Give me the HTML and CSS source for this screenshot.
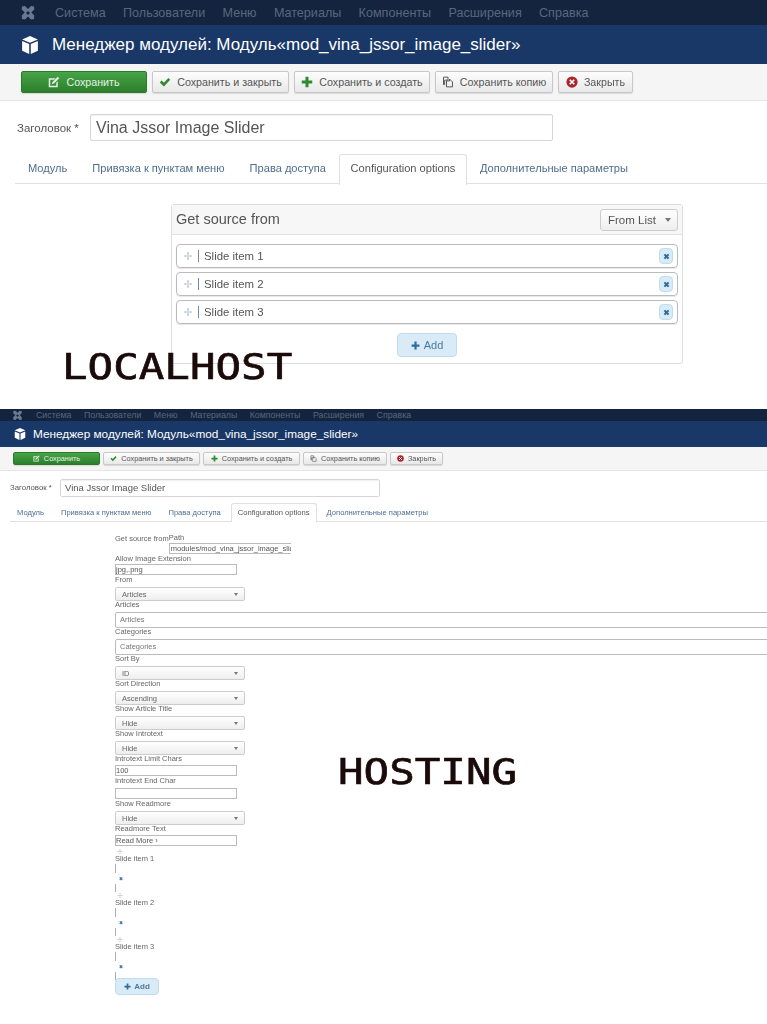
FILE: index.html
```html
<!DOCTYPE html>
<html lang="ru">
<head>
<meta charset="utf-8">
<title>Менеджер модулей</title>
<link rel="stylesheet" href="styles.css">
</head>
<body>
<svg class="defs" width="0" height="0" aria-hidden="true">
  <symbol id="i-joomla" viewBox="0 0 16 16"><path d="M2 1.500 5 1l3 3 3-3 3 .5.3 3-3 3 3 3-.3 3.500-3 .5-3-3-3 3-3-.5-.3-3.500 3-3-3-3zM8 6 6 8l2 2 2-2z" fill="currentColor"/></symbol>
  <symbol id="i-cube" viewBox="0 0 16 16"><path d="M8 0 15 3 8 6 1 3zM1 4.500 7.300 7.200V16L1 13zM15 4.500 8.700 7.200V16L15 13z" fill="currentColor"/></symbol>
  <symbol id="i-edit" viewBox="0 0 16 16"><path d="M1 3h9L8 5H3v8h8V9l2-2v8H1zM13 1l2 2-7 7-3 1 1-3z" fill="currentColor"/></symbol>
  <symbol id="i-check" viewBox="0 0 16 16"><path d="M1 8.500 3.500 6 6.500 9 12.500 2.500 15 5 6.500 14z" fill="currentColor"/></symbol>
  <symbol id="i-plus" viewBox="0 0 16 16"><path d="M6 1h4v5h5v4h-5v5H6v-5H1V6h5z" fill="currentColor"/></symbol>
  <symbol id="i-copy" viewBox="0 0 16 16"><path d="M2 1.500h6v4h-4.500v6H2zM6 6.500h4V4l4 4v6.500H6z" fill="none" stroke="currentColor" stroke-width="1.300"/></symbol>
  <symbol id="i-close" viewBox="0 0 16 16"><circle cx="8" cy="8" r="7.500" fill="currentColor"/><path d="M5 5l6 6M11 5l-6 6" stroke="#fff" stroke-width="2.200"/></symbol>
  <symbol id="i-x" viewBox="0 0 16 16"><path d="M3 5.500 5.500 3 8 5.500 10.500 3 13 5.500 10.500 8 13 10.500 10.500 13 8 10.500 5.500 13 3 10.500 5.500 8z" fill="currentColor"/></symbol>
  <symbol id="i-move" viewBox="0 0 16 16"><path d="M8 0 10.500 3H8.700v4.300H13V5.500L16 8l-3 2.500V8.700H8.700V13h1.800L8 16l-2.500-3h1.800V8.700H3v1.800L0 8l3-2.500v1.800h4.300V3H5.500z" fill="currentColor"/></symbol>
</svg>

<section class="local">
  <nav class="nav">
    <svg class="nav-logo"><use href="#i-joomla"/></svg>
    <a>Система</a><a>Пользователи</a><a>Меню</a><a>Материалы</a><a>Компоненты</a><a>Расширения</a><a>Справка</a>
  </nav>
  <header class="head">
    <svg class="head-icon"><use href="#i-cube"/></svg>
    <h1>Менеджер модулей: Модуль«mod_vina_jssor_image_slider»</h1>
  </header>
  <div class="bar">
    <button class="btn save w1"><svg><use href="#i-edit"/></svg>Сохранить</button>
    <button class="btn w2"><svg class="green"><use href="#i-check"/></svg>Сохранить и закрыть</button>
    <button class="btn w3"><svg class="green"><use href="#i-plus"/></svg>Сохранить и создать</button>
    <button class="btn w4"><svg><use href="#i-copy"/></svg>Сохранить копию</button>
    <button class="btn w5"><svg class="red"><use href="#i-close"/></svg>Закрыть</button>
  </div>
  <div class="title-row">
    <label>Заголовок *</label>
    <div class="title-input">Vina Jssor Image Slider</div>
  </div>
  <div class="tabs">
    <a>Модуль</a><a>Привязка к пунктам меню</a><a>Права доступа</a><a class="active">Configuration options</a><a>Дополнительные параметры</a>
  </div>
  <div class="panel">
    <div class="panel-head">
      <span class="panel-title">Get source from</span>
      <div class="panel-select">From List<i class="caret"></i></div>
    </div>
    <div class="panel-body">
      <div class="item"><svg class="move"><use href="#i-move"/></svg><span class="sep"></span><span class="item-name">Slide item 1</span><b class="del"><svg><use href="#i-x"/></svg></b></div>
      <div class="item"><svg class="move"><use href="#i-move"/></svg><span class="sep"></span><span class="item-name">Slide item 2</span><b class="del"><svg><use href="#i-x"/></svg></b></div>
      <div class="item"><svg class="move"><use href="#i-move"/></svg><span class="sep"></span><span class="item-name">Slide item 3</span><b class="del"><svg><use href="#i-x"/></svg></b></div>
      <button class="add"><svg><use href="#i-plus"/></svg>Add</button>
    </div>
  </div>
  <div class="stamp stamp-local">LOCALHOST</div>
</section>

<section class="hosting">
  <nav class="nav">
    <svg class="nav-logo"><use href="#i-joomla"/></svg>
    <a>Система</a><a>Пользователи</a><a>Меню</a><a>Материалы</a><a>Компоненты</a><a>Расширения</a><a>Справка</a>
  </nav>
  <header class="head">
    <svg class="head-icon"><use href="#i-cube"/></svg>
    <h1>Менеджер модулей: Модуль«mod_vina_jssor_image_slider»</h1>
  </header>
  <div class="bar">
    <button class="btn save w1"><svg><use href="#i-edit"/></svg>Сохранить</button>
    <button class="btn w2"><svg class="green"><use href="#i-check"/></svg>Сохранить и закрыть</button>
    <button class="btn w3"><svg class="green"><use href="#i-plus"/></svg>Сохранить и создать</button>
    <button class="btn w4"><svg><use href="#i-copy"/></svg>Сохранить копию</button>
    <button class="btn w5"><svg class="red"><use href="#i-close"/></svg>Закрыть</button>
  </div>
  <div class="title-row">
    <label>Заголовок *</label>
    <div class="title-input">Vina Jssor Image Slider</div>
  </div>
  <div class="tabs">
    <a>Модуль</a><a>Привязка к пунктам меню</a><a>Права доступа</a><a class="active">Configuration options</a><a>Дополнительные параметры</a>
  </div>
  <div class="form">
    <div class="path-row">
      <span class="lab">Get source from</span>
      <div class="path-col">
        <span class="lab-path">Path</span>
        <div class="field path">modules/mod_vina_jssor_image_slid</div>
      </div>
    </div>
    <span class="lab">Allow Image Extension</span>
    <div class="field short first">jpg,.png</div>
    <span class="lab">From</span>
    <div class="sel">Articles<i class="caret"></i></div>
    <span class="lab">Articles</span>
    <div class="wide">Articles</div>
    <span class="lab">Categories</span>
    <div class="wide">Categories</div>
    <span class="lab">Sort By</span>
    <div class="sel">ID<i class="caret"></i></div>
    <span class="lab">Sort Direction</span>
    <div class="sel">Ascending<i class="caret"></i></div>
    <span class="lab">Show Article Title</span>
    <div class="sel">Hide<i class="caret"></i></div>
    <span class="lab">Show Introtext</span>
    <div class="sel">Hide<i class="caret"></i></div>
    <span class="lab">Introtext Limit Chars</span>
    <div class="field short">100</div>
    <span class="lab">Introtext End Char</span>
    <div class="field short end"></div>
    <span class="lab">Show Readmore</span>
    <div class="sel">Hide<i class="caret"></i></div>
    <span class="lab">Readmore Text</span>
    <div class="field short last">Read More ›</div>
    <div class="slide"><svg class="move"><use href="#i-move"/></svg><span class="lab">Slide item 1</span><span class="rule"></span><svg class="del-x"><use href="#i-x"/></svg><span class="rule"></span></div>
    <div class="slide"><svg class="move"><use href="#i-move"/></svg><span class="lab">Slide item 2</span><span class="rule"></span><svg class="del-x"><use href="#i-x"/></svg><span class="rule"></span></div>
    <div class="slide"><svg class="move"><use href="#i-move"/></svg><span class="lab">Slide item 3</span><span class="rule"></span><svg class="del-x"><use href="#i-x"/></svg><span class="rule"></span></div>
    <button class="add"><svg><use href="#i-plus"/></svg>Add</button>
  </div>
  <div class="stamp stamp-hosting">HOSTING</div>
</section>
</body>
</html>
```
FILE: styles.css
```css
* { box-sizing: border-box; }
html, body { margin: 0; padding: 0; }
body {
  width: 767px;
  height: 1024px;
  overflow: hidden;
  background: #fff;
  font-family: "Liberation Sans", Arial, sans-serif;
  color: #555;
}
.defs { position: absolute; }
section { position: relative; overflow: hidden; }
button { font-family: inherit; margin: 0; }

/* ---------- shared chrome ---------- */
.nav { display: flex; align-items: center; background: #14243f; color: #59677c; }
.nav a { display: block; }
.head { display: flex; align-items: center; background: #1a3867; color: #fff; }
.head h1 { margin: 0; font-weight: 400; white-space: nowrap; }
.bar { display: flex; background: #f5f5f5; border-bottom: 1px solid #e5e5e5; }
.btn {
  display: flex; align-items: center; justify-content: center;
  border: 1px solid #c8c8c8; border-radius: 2px;
  background: linear-gradient(#fdfdfd, #e8e8e8);
  color: #555; padding: 0; white-space: nowrap;
  box-shadow: 0 1px 1px rgba(0,0,0,.12);
}
.btn.save { background: linear-gradient(#47a447, #2b7f2b); border-color: #2a7a2a; color: #e4f1e4; }
.green { color: #2f8a2f; }
.red { color: #a8262c; }
.title-row { display: flex; align-items: center; }
.title-input { border: 1px solid #d6d6d6; border-radius: 2px; background: #fff; color: #555; box-shadow: inset 0 1px 1px rgba(0,0,0,.06); }
.tabs { display: flex; border-bottom: 1px solid #e0e0e0; color: #4f6d8f; }
.tabs a { display: block; white-space: nowrap; }
.tabs .active { background: #fff; color: #555; border: 1px solid #e0e0e0; border-bottom: 0; border-radius: 3px 3px 0 0; margin-bottom: -1px; }
.caret { display: inline-block; border: 3.500px solid transparent; border-top: 4px solid #777; border-bottom: 0; }
.add {
  display: flex; align-items: center; justify-content: center;
  background: #d9ebf7; border: 1px solid #c0dcef; border-radius: 4px;
  color: #4a7ba0; padding: 0;
}
.add svg { color: #2f6f9f; }
.stamp {
  position: absolute;
  font-family: "DejaVu Sans Mono", monospace;
  font-weight: 400;
  color: #1a0a0a;
  line-height: 1;
  white-space: nowrap;
  font-size: 42.500px;
  transform: scaleY(.85);
  -webkit-text-stroke: .8px #1a0a0a;
}

/* ---------- localhost ---------- */
.local { height: 409px; filter: blur(.2px); }
.stamp-local { left: 62px; top: 346px; }
.local .nav { height: 25px; padding-left: 20px; font-size: 12.600px; }
.local .nav-logo { width: 16px; height: 16px; margin-right: 19px; color: #6a7890; }
.local .nav a { margin-right: 17.300px; }
.local .head { height: 39px; padding-left: 21px; }
.local .head-icon { width: 18px; height: 18px; margin-right: 13px; }
.local .head h1 { font-size: 17px; }
.local .bar { height: 37px; padding: 7px 0 0 21px; gap: 5px; }
.local .btn { height: 22px; font-size: 10.700px; }
.local .btn svg { width: 12px; height: 12px; margin-right: 6px; }
.local .w1 { width: 126px; }
.local .w2 { width: 137px; }
.local .w3 { width: 136px; }
.local .w4 { width: 118px; }
.local .w5 { width: 75px; }
.local .title-row { padding: 13px 0 0 17px; height: 53px; font-size: 11.500px; }
.local .title-row label { width: 73px; margin-top: -13px; }
.local .title-input { width: 463px; height: 27px; line-height: 25px; padding-left: 5px; font-size: 16px; margin-top: -13px; }
.local .tabs { margin-left: 15px; height: 30px; font-size: 11.100px; }
.local .tabs a { padding: 7px 12.500px 0; line-height: 15px; }
.local .tabs a:first-child { padding-left: 13px; }
.local .tabs .active { padding: 6px 11px 0; height: 31px; }

.panel { width: 512px; height: 160px; margin: 20px 0 0 171px; border: 1px solid #ddd; border-radius: 3px; }
.panel-head { display: flex; align-items: center; justify-content: space-between; height: 30px; padding: 0 4px; background: #f7f7f7; border-bottom: 1px solid #e2e2e2; font-size: 14.500px; color: #555; }
.panel-title { margin-top: -2px; }
.panel-select { display: flex; align-items: center; justify-content: space-between; width: 78px; height: 22px; padding: 0 6px 0 7px; border: 1px solid #ccc; border-radius: 3px; background: linear-gradient(#fff, #eee); font-size: 11.500px; }
.panel-body { display: flex; flex-direction: column; gap: 4px; padding: 9px 4px 0; }
.item { display: flex; align-items: center; height: 24px; padding: 0 4px 0 7px; border: 1px solid #bbb; border-radius: 4px; font-size: 11.400px; box-shadow: 0 1px 1px rgba(0,0,0,.1); }
.item .move { width: 8px; height: 8px; color: #9db0c0; }
.sep { width: 1px; height: 12px; background: #6a8aa5; margin: 0 5px 0 6px; }
.item-name { flex: 1; }
.del { display: flex; align-items: center; justify-content: center; width: 14px; height: 16px; background: #d9ebf7; border: 1px solid #c0dcef; border-radius: 4px; color: #2f6f9f; }
.del svg { width: 9px; height: 9px; }
.panel-body .add { align-self: center; width: 60px; height: 24px; margin-top: 5px; font-size: 11px; }
.panel-body .add svg { width: 9px; height: 9px; margin-right: 4px; }

/* ---------- hosting ---------- */
.hosting { height: 615px; filter: blur(.4px); }
.stamp-hosting { left: 338px; top: 342px; }
.hosting .nav { height: 12px; padding-left: 12px; font-size: 8.800px; }
.hosting .nav-logo { width: 11px; height: 11px; margin-right: 13px; color: #6a7890; }
.hosting .nav a { margin-right: 12.500px; }
.hosting .head { height: 26px; padding-left: 14px; }
.hosting .head-icon { width: 12px; height: 12px; margin-right: 7px; }
.hosting .head h1 { font-size: 11.800px; }
.hosting .bar { height: 24px; padding: 5px 0 0 13px; gap: 3px; }
.hosting .btn { height: 13px; font-size: 7.300px; }
.hosting .btn svg { width: 7px; height: 7px; margin-right: 4px; }
.hosting .w1 { width: 87px; }
.hosting .w2 { width: 97px; }
.hosting .w3 { width: 97px; }
.hosting .w4 { width: 84px; }
.hosting .w5 { width: 53px; }
.hosting .title-row { height: 33px; padding: 0 0 0 10px; font-size: 7.800px; }
.hosting .title-row label { width: 50px; }
.hosting .title-input { width: 320px; height: 18px; line-height: 16px; padding-left: 4px; font-size: 9.500px; }
.hosting .tabs { margin-left: 10px; height: 18px; font-size: 7.600px; }
.hosting .tabs a { padding: 3px 8px 0; line-height: 12px; margin-right: 1px; }
.hosting .tabs a:first-child { padding-left: 7px; }
.hosting .tabs .active { padding: 3px 6px 0; height: 19px; margin: -1px 2px -1px 1px; }

.form { display: flex; flex-direction: column; align-items: flex-start; padding: 12px 0 0 115px; font-size: 7.500px; color: #666; width: 900px; }
.lab { display: block; line-height: 7px; height: 7px; }
.path-row { display: flex; margin-bottom: 1px; }
.path-row .lab { margin-top: 1px; }
.path-col { display: flex; flex-direction: column; }
.lab-path { height: 9px; line-height: 7px; }
.field { background: #fff; border: 1px solid #bbb; height: 11px; line-height: 9px; color: #555; white-space: nowrap; overflow: hidden; }
.field.path { width: 122px; padding-left: 1px; border-right: 0; }
.field.short { width: 122px; margin: 3px 0 1px; }
.field.short.first { margin-top: 2px; }
.field.short.end { margin: 4px 0 1px; }
.field.short.last { margin-bottom: 2px; }
.sel { display: flex; align-items: center; justify-content: space-between; width: 130px; height: 14px; padding: 0 6px; margin-top: 4px; border: 1px solid #ccc; border-radius: 2px; background: linear-gradient(#fff, #eee); }
.sel .caret { border-width: 2px; border-top-width: 3px; border-bottom: 0; }
.wide { width: 700px; height: 16px; line-height: 14px; padding-left: 4px; margin-top: 4px; border: 1px solid #bbb; border-radius: 2px; color: #777; }
.slide { display: flex; flex-direction: column; align-items: flex-start; height: 44px; }
.slide .move { width: 6px; height: 6px; margin: 1px 0 0 2px; color: #a9bac8; }
.slide .lab { margin: 1px 0 2px; }
.rule { display: block; width: 1px; height: 9px; background: #aab; }
.del-x { width: 6px; height: 6px; margin: 3px 0 3px 3px; color: #3c78a8; }
.form .add { width: 44px; height: 17px; margin-top: -2px; font-size: 8px; font-weight: 700; }
.form .add svg { width: 7px; height: 7px; margin-right: 3px; }
```
